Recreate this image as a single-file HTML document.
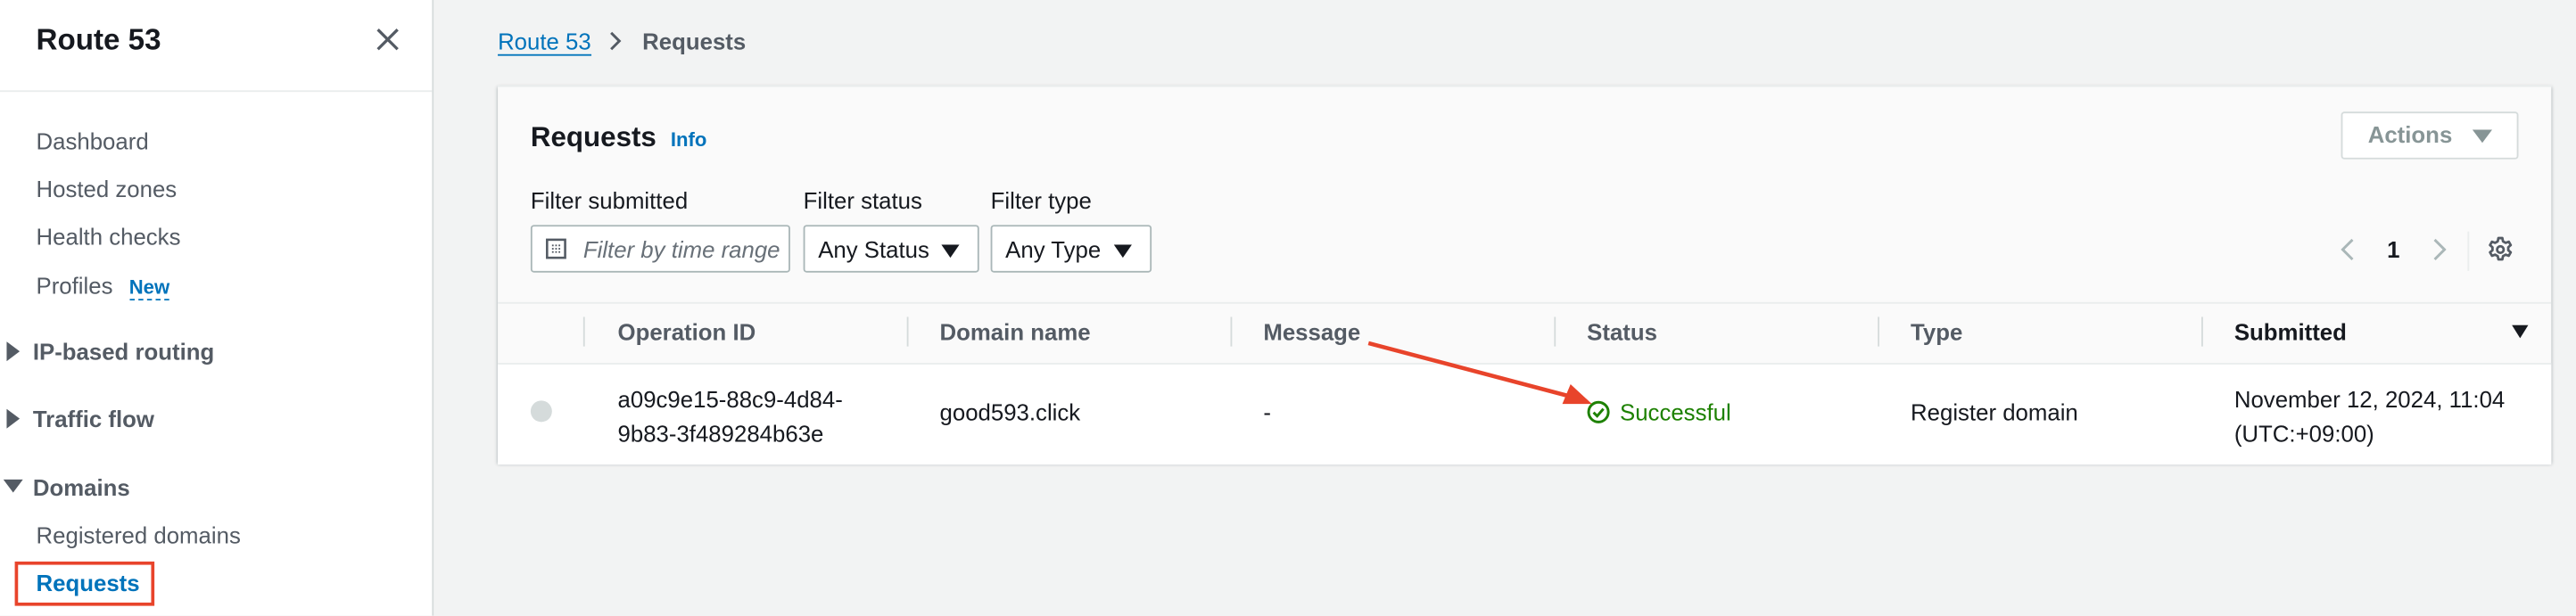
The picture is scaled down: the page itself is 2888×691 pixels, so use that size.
<!DOCTYPE html>
<html><head><meta charset="utf-8">
<style>
html,body{margin:0;padding:0;width:2888px;height:690px;overflow:hidden;background:#f2f3f3;}
#w{position:absolute;left:0;top:0;width:1568px;height:375px;transform:scale(1.8418);transform-origin:0 0;font-family:"Liberation Sans",sans-serif;font-size:14px;color:#16191f;}
.a{position:absolute;white-space:nowrap;}
.side{position:absolute;left:0;top:0;width:263px;height:375px;background:#fff;border-right:1px solid #d5dbdb;}
.nav{color:#545b64;font-size:14px;}
.b{font-weight:bold;}
.card{position:absolute;left:303px;top:52px;width:1250px;height:229px;background:#fafafa;box-shadow:0 1px 2px rgba(0,28,36,.35);border-top:1px solid #eaeded;}
.inp{position:absolute;height:29px;border:1px solid #aab7b8;border-radius:2px;background:#fff;box-sizing:border-box;}
.th{color:#545b64;font-weight:bold;}
.sep{position:absolute;width:1px;height:18px;background:#d5dbdb;top:192px;}
</style></head><body>
<div id="w">
<div class="side">
 <div class="a b" style="left:22px;top:14px;font-size:18px;color:#16191f;">Route 53</div>
 <svg class="a" style="left:229px;top:17px" width="14" height="14"><path d="M1 1L13 13M13 1L1 13" stroke="#545b64" stroke-width="1.8"/></svg>
 <div class="a" style="left:0;top:55px;width:263px;height:1px;background:#eaeded"></div>
 <div class="a nav" style="left:22px;top:78px">Dashboard</div>
 <div class="a nav" style="left:22px;top:107px">Hosted zones</div>
 <div class="a nav" style="left:22px;top:136px">Health checks</div>
 <div class="a nav" style="left:22px;top:166px">Profiles <span style="color:#0073bb;font-weight:bold;font-size:12px;margin-left:6px;border-bottom:1px dashed #0073bb">New</span></div>
 <svg class="a" style="left:4px;top:208px" width="8" height="12"><path d="M0 0L8 6L0 12Z" fill="#545b64"/></svg>
 <div class="a b" style="left:20px;top:206px;color:#545b64">IP-based routing</div>
 <svg class="a" style="left:4px;top:249px" width="8" height="12"><path d="M0 0L8 6L0 12Z" fill="#545b64"/></svg>
 <div class="a b" style="left:20px;top:247px;color:#545b64">Traffic flow</div>
 <svg class="a" style="left:2px;top:292px" width="12" height="8"><path d="M0 0L12 0L6 8Z" fill="#545b64"/></svg>
 <div class="a b" style="left:20px;top:289px;color:#545b64">Domains</div>
 <div class="a nav" style="left:22px;top:318px">Registered domains</div>
 <div class="a" style="left:9px;top:342px;width:81px;height:23px;border:2px solid #e8442b"></div>
 <div class="a b" style="left:22px;top:347px;color:#0073bb">Requests</div>
</div>
<div class="a" style="left:303px;top:17px;color:#0073bb;border-bottom:1px solid #0073bb;line-height:16px">Route 53</div>
<svg class="a" style="left:371px;top:19px" width="8" height="12"><path d="M1 1L6 6L1 11" stroke="#545b64" stroke-width="1.6" fill="none"/></svg>
<div class="a b" style="left:391px;top:17px;color:#545b64;line-height:16px">Requests</div>

<div class="card">
 <div class="a b" style="left:20px;top:21px;font-size:17px">Requests <span style="color:#0073bb;font-size:12px;margin-left:4px">Info</span></div>
 <div class="a" style="left:1122px;top:15px;width:108px;height:29px;border:1px solid #d5dbdb;border-radius:2px;background:#fff;box-sizing:border-box;color:#879596;font-weight:bold;line-height:27px;text-align:center">Actions <svg width="12" height="8" style="margin-left:8px"><path d="M0 0L12 0L6 8Z" fill="#879596"/></svg></div>
 <div class="a" style="left:20px;top:61px">Filter submitted</div>
 <div class="a" style="left:186px;top:61px">Filter status</div>
 <div class="a" style="left:300px;top:61px">Filter type</div>
 <div class="inp" style="left:20px;top:84px;width:158px">
  <svg class="a" style="left:8px;top:7px" width="13" height="13"><rect x="1" y="1" width="11" height="11" fill="none" stroke="#545b64" stroke-width="1.4"/><path d="M4 4h1v1h-1zM6 4h1v1h-1zM8 4h1v1h-1zM4 6h1v1h-1zM6 6h1v1h-1zM8 6h1v1h-1zM4 8h1v1h-1zM6 8h1v1h-1zM8 8h1v1h-1z" fill="#545b64"/></svg>
  <span class="a" style="left:31px;top:6px;font-style:italic;color:#687078">Filter by time range</span></div>
 <div class="inp" style="left:186px;top:84px;width:107px"><span class="a" style="left:8px;top:6px">Any Status</span><svg class="a" style="left:83px;top:11px" width="11" height="8"><path d="M0 0L11 0L5.5 8Z" fill="#16191f"/></svg></div>
 <div class="inp" style="left:300px;top:84px;width:98px"><span class="a" style="left:8px;top:6px">Any Type</span><svg class="a" style="left:74px;top:11px" width="11" height="8"><path d="M0 0L11 0L5.5 8Z" fill="#16191f"/></svg></div>
 <svg class="a" style="left:1122px;top:92px" width="8" height="14"><path d="M7 1L1 7L7 13" stroke="#aab7b8" stroke-width="1.6" fill="none"/></svg>
 <div class="a b" style="left:1150px;top:91px">1</div>
 <svg class="a" style="left:1178px;top:92px" width="8" height="14"><path d="M1 1L7 7L1 13" stroke="#aab7b8" stroke-width="1.6" fill="none"/></svg>
 <div class="a" style="left:1199px;top:88px;width:1px;height:24px;background:#eaeded"></div>
 <svg class="a" style="left:1211px;top:91px" width="16" height="16" viewBox="0 0 16 16"><path d="M6.8 1h2.4l.4 2 1.6.9 1.9-.7 1.2 2.1-1.5 1.3v1.8l1.5 1.3-1.2 2.1-1.9-.7-1.6.9-.4 2H6.8l-.4-2-1.6-.9-1.9.7-1.2-2.1 1.5-1.3V6.6L1.7 5.3l1.2-2.1 1.9.7 1.6-.9z" fill="none" stroke="#545b64" stroke-width="1.5" stroke-linejoin="round"/><circle cx="8" cy="8" r="2" fill="none" stroke="#545b64" stroke-width="1.5"/></svg>
 <div class="a" style="left:0;top:131px;width:1250px;height:1px;background:#eaeded"></div>
 <div class="sep" style="left:52px;top:140px"></div><div class="sep" style="left:249px;top:140px"></div><div class="sep" style="left:446px;top:140px"></div><div class="sep" style="left:643px;top:140px"></div><div class="sep" style="left:840px;top:140px"></div><div class="sep" style="left:1037px;top:140px"></div>
 <div class="a th" style="left:73px;top:141px">Operation ID</div>
 <div class="a th" style="left:269px;top:141px">Domain name</div>
 <div class="a th" style="left:466px;top:141px">Message</div>
 <div class="a th" style="left:663px;top:141px">Status</div>
 <div class="a th" style="left:860px;top:141px">Type</div>
 <div class="a b" style="left:1057px;top:141px">Submitted</div>
 <svg class="a" style="left:1226px;top:145px" width="10" height="8"><path d="M0 0L10 0L5 8Z" fill="#16191f"/></svg>
 <div class="a" style="left:0;top:168px;width:1250px;height:61px;background:#fff;border-top:1px solid #eaeded"></div>
 <div class="a" style="left:20px;top:191px;width:13px;height:13px;border-radius:50%;background:#d5dbdb"></div>
 <div class="a" style="left:73px;top:180px;line-height:21px">a09c9e15-88c9-4d84-<br>9b83-3f489284b63e</div>
 <div class="a" style="left:269px;top:190px">good593.click</div>
 <div class="a" style="left:466px;top:190px">-</div>
 <svg class="a" style="left:663px;top:191px" width="14" height="14"><circle cx="7" cy="7" r="6" fill="none" stroke="#1d8102" stroke-width="1.6"/><path d="M4 7.2L6.2 9.4L10 5" fill="none" stroke="#1d8102" stroke-width="1.6"/></svg>
 <div class="a" style="left:683px;top:190px;color:#1d8102">Successful</div>
 <div class="a" style="left:860px;top:190px">Register domain</div>
 <div class="a" style="left:1057px;top:180px;line-height:21px">November 12, 2024, 11:04<br>(UTC:+09:00)</div>
</div>
<svg class="a" style="left:0;top:0" width="1568" height="375"><path d="M833 209L958 242" stroke="#e8442b" stroke-width="2.5"/><path d="M969 246L951 246L956 234Z" fill="#e8442b"/></svg>
</div>
</body></html>
